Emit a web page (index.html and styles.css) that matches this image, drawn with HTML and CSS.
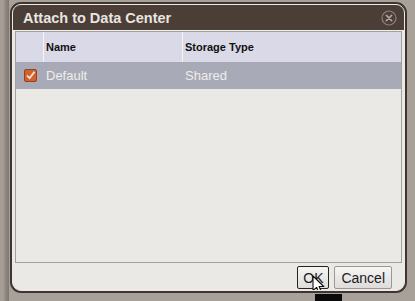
FILE: index.html
```html
<!DOCTYPE html>
<html lang="en">
<head>
  <meta charset="UTF-8">
  <title>Attach to Data Center</title>
  <link rel="stylesheet" href="styles.css">
</head>
<body>
  <!-- Dialog -->
  <div class="dialog">
    <div class="frame">
      <div class="title-bar">
        <span class="title">Attach to Data Center</span>
        <svg class="close" width="16" height="16" viewBox="0 0 16 16">
          <circle cx="8" cy="8" r="7" fill="none" stroke="#8a827c" stroke-width="1.2"/>
          <path d="M5.4 5.4 L10.6 10.6 M10.6 5.4 L5.4 10.6" stroke="#aaa29b" stroke-width="1.7" stroke-linecap="round"/>
        </svg>
      </div>

      <div class="content">
        <div class="grid">
          <div class="row header">
            <div class="cell check-col"></div>
            <div class="cell name-col">Name</div>
            <div class="cell type-col">Storage Type</div>
          </div>
          <div class="row selected">
            <div class="cell check-col">
              <svg width="13" height="13" viewBox="0 0 13 13">
                <rect x="0.5" y="0.5" width="12" height="12" rx="1.5" fill="#cf6330" stroke="#9c3f1a"/>
                <path d="M3 6.5 L5.6 9.2 L10.5 2.8" fill="none" stroke="#f6e6da" stroke-width="1.8"/>
              </svg>
            </div>
            <div class="cell name-col">Default</div>
            <div class="cell type-col">Shared</div>
          </div>
        </div>
      </div>

      <div class="footer">
        <div class="btn-wrap">
          <button class="btn focused">OK</button>
          <svg class="cursor" width="14" height="20" viewBox="0 0 14 20">
            <path d="M1 1 L1 15.5 L4.6 12.3 L7.2 18.4 L9.6 17.4 L7.1 11.5 L11.8 11.5 Z" fill="#fff" stroke="#111" stroke-width="1.1" stroke-linejoin="round"/>
          </svg>
        </div>
        <button class="btn">Cancel</button>
      </div>
    </div>
  </div>
</body>
</html>
```

FILE: styles.css
```css
/* General Styles */
body {
  margin: 0;
  width: 415px;
  height: 301px;
  overflow: hidden;
  padding: 2px 0 0 10px;
  box-sizing: border-box;
  font-family: "Liberation Sans", Arial, sans-serif;
  background:
    linear-gradient(#0a0a0a, #0a0a0a) 315px 294px / 27px 7px no-repeat,
    linear-gradient(90deg, #a59d96 0, #a59d96 3px, #8c847e 6px, #7d7570 9px, transparent 9px) 0 0 / 10px 100% no-repeat,
    #a8a19a;
}

/* Dialog */
.dialog {
  width: 397px;
  height: 291px;
  box-sizing: border-box;
  border: 2px solid #3e3531;
  border-radius: 11px;
  background: #3e3531;
}

.frame {
  height: 100%;
  box-sizing: border-box;
  border: 1px solid #ece9e5;
  border-radius: 9px;
  overflow: hidden;
  background: #ebe9e6;
  display: flex;
  flex-direction: column;
}

.title-bar {
  height: 25px;
  flex: none;
  background: #4a3e37;
  border-bottom: 1px solid #f1efec;
  display: flex;
  align-items: center;
  justify-content: space-between;
  padding: 0 7px 0 10px;
}

.title {
  color: #e9e5e1;
  font-size: 14.5px;
  font-weight: bold;
  margin-top: 1px;
}

.close {
  display: block;
}

/* Grid */
.content {
  padding: 0 2px;
}

.grid {
  height: 232px;
  box-sizing: border-box;
  border: 1px solid #a3a09d;
  background: #ebe9e6;
}

.row {
  display: grid;
  grid-template-columns: 28px 139px 1fr;
}

.cell {
  display: flex;
  align-items: center;
  padding-left: 2px;
}

.header {
  height: 30px;
  background: #dad9e7;
  font-size: 11px;
  font-weight: bold;
  color: #111;
}

.header .cell {
  border-right: 1px solid #f3f3f8;
}

.header .cell:last-child {
  border-right: none;
}

.selected {
  height: 27px;
  background: #a8abb7;
  font-size: 13px;
  color: #eeedec;
}

.selected .check-col {
  padding-left: 8px;
}

/* Footer buttons */
.footer {
  display: flex;
  justify-content: flex-end;
  gap: 5px;
  padding: 3px 12px 0 0;
}

.btn-wrap {
  position: relative;
}

.btn {
  height: 23px;
  padding: 0 6px;
  font-family: "Liberation Sans", Arial, sans-serif;
  font-size: 14px;
  color: #1a1a1a;
  border: 1px solid #9a9896;
  border-radius: 2px;
  background: linear-gradient(#f6f5f4, #dedcda);
}

.btn.focused {
  width: 32px;
  padding: 0;
  border-color: #262422;
}

.cursor {
  position: absolute;
  left: 15px;
  top: 9px;
}
```
